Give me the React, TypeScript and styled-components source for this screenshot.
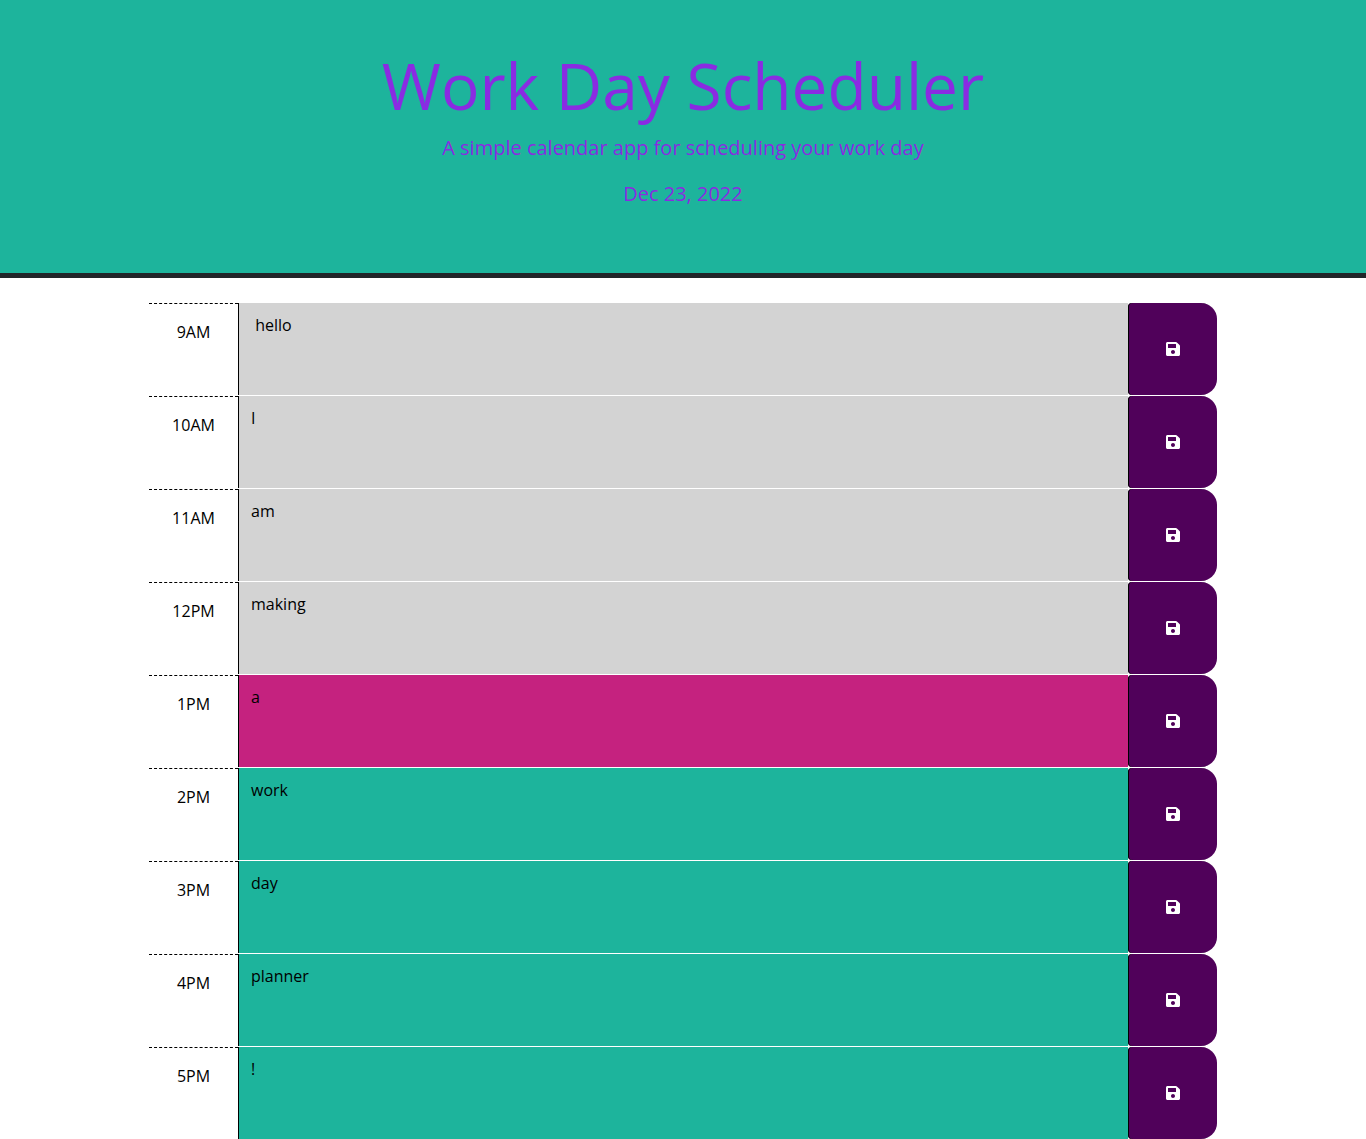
import React, { useState } from "react";
import styled, { createGlobalStyle } from "styled-components";
import { FaSave } from "react-icons/fa";

const GlobalStyle = createGlobalStyle`
  *, *::before, *::after { box-sizing: border-box; }
  body {
    margin: 0;
    background: #ffffff;
    color: #000000;
    font-family: "Open Sans", sans-serif;
    font-size: 16px;
    font-weight: 400;
    line-height: 24px;
  }
`;

const Header = styled.header`
  padding: 48px 16px 64px;
  border-bottom: 5px solid #212529;
  background: #1db49c;
  color: #8a2be2;
  text-align: center;
`;

const Title = styled.h1`
  margin: 0 0 9px;
  font-size: 64px;
  font-weight: 400;
  line-height: 76px;
`;

const Lead = styled.p`
  margin: 0;
  font-size: 20px;
  line-height: 30px;

  & + & {
    margin-top: 16px;
  }
`;

const Schedule = styled.main`
  max-width: 1140px;
  margin: 24px auto 0;
  padding: 0 36px;
`;

const TimeBlock = styled.form`
  display: grid;
  grid-template-columns: 1fr 10fr 1fr;
  border-top: 1px solid #ffffff;
`;

const Hour = styled.label`
  padding: 16px 0;
  border-top: 1px dashed #000000;
  text-align: center;
`;

type Phase = "past" | "present" | "future";

const phaseColors: Record<Phase, string> = {
  past: "#d3d3d3",
  present: "#c5227f",
  future: "#1db49c",
};

const Description = styled.textarea<{ $phase: Phase }>`
  display: block;
  width: 100%;
  height: 92px;
  margin: 0;
  padding: 10px 12px;
  border: 0;
  border-left: 1px solid #000000;
  outline: none;
  resize: none;
  background: ${({ $phase }) => phaseColors[$phase]};
  color: #000000;
  font: inherit;
`;

const SaveButton = styled.button`
  display: flex;
  align-items: center;
  justify-content: center;
  margin: 0;
  padding: 0;
  border: 0;
  border-radius: 4px 16px 16px 4px;
  box-shadow: inset 1px 0 #000000;
  background: #50015a;
  color: #ffffff;
  font-size: 16px;
  cursor: pointer;
`;

const blocks: { hour: string; text: string; phase: Phase }[] = [
  { hour: "9AM", text: " hello", phase: "past" },
  { hour: "10AM", text: "I", phase: "past" },
  { hour: "11AM", text: "am", phase: "past" },
  { hour: "12PM", text: "making", phase: "past" },
  { hour: "1PM", text: "a", phase: "present" },
  { hour: "2PM", text: "work", phase: "future" },
  { hour: "3PM", text: "day", phase: "future" },
  { hour: "4PM", text: "planner", phase: "future" },
  { hour: "5PM", text: "!", phase: "future" },
];

export default function App() {
  const [entries, setEntries] = useState(blocks.map((block) => block.text));

  const update = (index: number, value: string) =>
    setEntries((current) => current.map((entry, i) => (i === index ? value : entry)));

  return (
    <>
      <GlobalStyle />
      <Header>
        <Title>Work Day Scheduler</Title>
        <Lead>A simple calendar app for scheduling your work day</Lead>
        <Lead>Dec 23, 2022</Lead>
      </Header>
      <Schedule>
        {blocks.map(({ hour, phase }, index) => (
          <TimeBlock key={hour} onSubmit={(event) => event.preventDefault()}>
            <Hour htmlFor={`entry-${hour}`}>{hour}</Hour>
            <Description
              id={`entry-${hour}`}
              $phase={phase}
              spellCheck={false}
              value={entries[index]}
              onChange={(event) => update(index, event.target.value)}
            />
            <SaveButton type="submit" aria-label={`Save ${hour}`}>
              <FaSave aria-hidden="true" />
            </SaveButton>
          </TimeBlock>
        ))}
      </Schedule>
    </>
  );
}
